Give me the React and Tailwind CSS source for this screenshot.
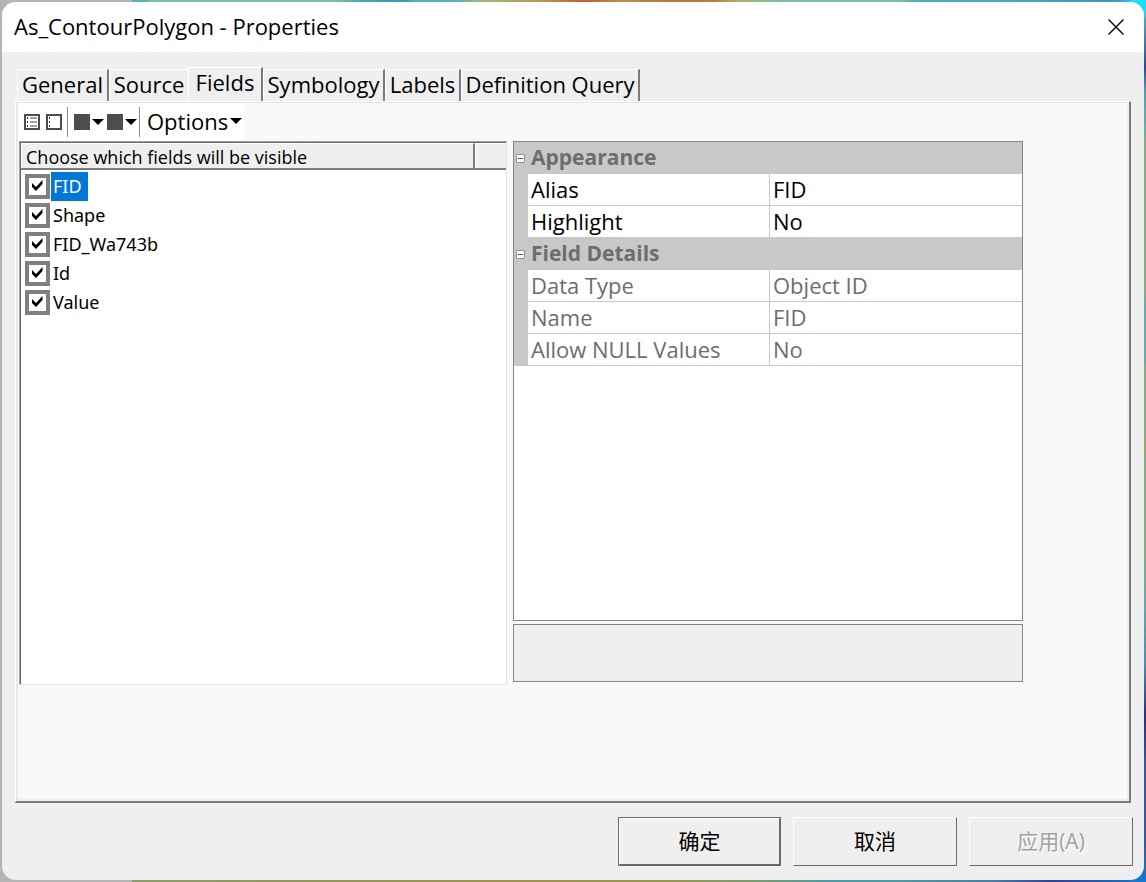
const TABS = [
  { name: 'General', className: 'w-[92px]' },
  { name: 'Source', className: 'w-[79px]' },
  { name: 'Fields', className: 'w-[75px]', active: true },
  { name: 'Symbology', className: 'w-[122px]' },
  { name: 'Labels', className: 'w-[76px]' },
  { name: 'Definition Query', className: 'w-[179px]' }
]

const FIELDS = ['FID', 'Shape', 'FID_Wa743b', 'Id', 'Value']

const GROUPS = [
  {
    title: 'Appearance',
    color: 'text-black',
    rows: [
      ['Alias', 'FID'],
      ['Highlight', 'No']
    ]
  },
  {
    title: 'Field Details',
    color: 'text-[#6d6d6d]',
    rows: [
      ['Data Type', 'Object ID'],
      ['Name', 'FID'],
      ['Allow NULL Values', 'No']
    ]
  }
]

const raised = 'border border-t-white border-l-white border-r-[#696969] border-b-[#696969]'

// Strips of the map that peek out from behind the dialog
function MapBackdrop() {
  return (
    <div aria-hidden="true" className="absolute inset-0 bg-[#b4b4b4]">
      <div className="absolute top-0 right-0 left-[132px] h-4 bg-[linear-gradient(to_right,#58b4b4_0_15px,#78bca4_15px_205px,#4ba5b4_230px,#4693b8_270px,#5bb2b5_285px_325px,#a0b878_350px,#b89850_410px,#c06038_450px,#b89048_490px,#bd7a3d_530px_580px,#a8b468_605px,#78bca4_650px_770px,#48a8bc_790px_870px,#4693b8_980px,#20c8f0_1000px)]" />
      <div className="absolute right-0 bottom-0 left-[132px] h-4 bg-[linear-gradient(to_right,#8c9c64,#a09448_400px,#98984c_540px,#7c9c6c_620px,#4c9ca4_700px_760px,#4480a8_860px,#3040a0_920px,#1878d0)]" />
      <div className="absolute top-0 right-0 bottom-0 w-4 bg-[linear-gradient(to_bottom,#20d8f8_0_14px,#48a8bc_20px,#3048a0_68px,#48a0b4_90px,#60b4ac_130px,#84ac80_140px_290px,#5cb0ac_310px_360px,#84ac80_370px_435px,#a8a058_445px,#84ac80_455px_555px,#60acac_600px,#4490b0_665px,#302c90_715px,#3854a8_765px_840px,#1878d0)]" />
    </div>
  )
}

function ListIcon({ lines }) {
  return (
    <svg viewBox="0 0 16 16" className="size-4" shapeRendering="crispEdges">
      <rect x="1" y="1" width="14" height="14" fill="#fff" stroke="#504850" strokeWidth="2" />
      <path d="M3 3h1v2H3zM3 7h1v2H3zM3 11h1v2H3z" fill="#333" />
      {lines && <path d="M6 4h7M6 8h7M6 12h7" stroke="#a0a0a0" strokeWidth="2" />}
    </svg>
  )
}

function Arrow() {
  return (
    <svg viewBox="0 0 12 6" className="h-[6px] w-3">
      <path d="M0 0h12L6 6z" fill="#000" />
    </svg>
  )
}

function Toolbar() {
  return (
    <div role="toolbar" className="flex h-[38px] w-max items-center bg-white pr-[2px] pl-[5px]">
      <button aria-label="Turn all fields on" className="mr-[6px]"><ListIcon lines /></button>
      <button aria-label="Turn all fields off"><ListIcon /></button>
      <div className="mr-[6px] ml-[5px] h-[30px] w-px bg-[#8a8a8a]" />
      <button aria-label="Move up" className="mr-[3px] flex items-center gap-[2px]">
        <span className="size-4 bg-[#4d4d4d]" />
        <Arrow />
      </button>
      <button aria-label="Move down" className="flex items-center gap-[2px]">
        <span className="size-4 bg-[#4d4d4d]" />
        <Arrow />
      </button>
      <div className="mr-[7px] ml-[2px] h-[30px] w-px bg-[#8a8a8a]" />
      <button className="flex items-center gap-[2px] pb-[2px]">
        Options
        <Arrow />
      </button>
    </div>
  )
}

function FieldList() {
  return (
    <div className="flex flex-[486] flex-col border border-t-[#a0a0a0] border-r-[#e3e3e3] border-b-[#e3e3e3] border-l-[#a0a0a0] bg-white text-[18px]">
      <div className="flex flex-1 flex-col border-t border-l border-[#696969]">
        <div className="flex h-[27px] border-b-2 border-[#7d7d7d] bg-[#efefef] leading-[26px]">
          <div className="flex-1 border-t border-r-2 border-l border-t-white border-r-[#7d7d7d] border-l-white pl-1">
            Choose which fields will be visible
          </div>
          <div className="w-[31px] border-t border-l border-white" />
        </div>
        <ul className='pt-[2px] pl-1 font-["Noto_Sans"]'>
          {FIELDS.map((name) => (
            <li key={name}>
              <label className="flex h-[29px] w-max items-center gap-px">
                <span className="relative size-[25px]">
                  <input
                    type="checkbox"
                    defaultChecked
                    className="block size-[25px] appearance-none border-4 border-[#808080] bg-white"
                  />
                  <svg viewBox="0 0 11 11" className="pointer-events-none absolute top-[6px] left-[7px] size-[11px]">
                    <path d="M0 3L4 7L10.500 0V4L4 11L0 7z" fill="#000" />
                  </svg>
                </span>
                <span className={name === 'FID' ? 'bg-[#0078d7] pr-[6px] pl-[2px] leading-[29px] text-white' : 'pl-[2px] leading-[29px]'}>
                  {name}
                </span>
              </label>
            </li>
          ))}
        </ul>
      </div>
    </div>
  )
}

function PropertyGrid() {
  return (
    <div className="flex-1 border border-[#828790] bg-white">
      <table className="w-full table-fixed border-separate border-spacing-0 text-left leading-[28px]">
        <colgroup>
          <col className="w-[14px]" />
          <col className="w-[242px]" />
          <col />
        </colgroup>
        {GROUPS.map((g) => (
          <tbody key={g.title}>
            <tr className="h-8 bg-[#c8c8c8]">
              <td className="p-0">
                <button aria-label={`Collapse ${g.title}`} className="ml-[2px] flex size-[9px] items-center rounded-[1px] border border-[#919191] bg-white px-px">
                  <span className="h-px w-full bg-[#2b50b4]" />
                </button>
              </td>
              <th colSpan="2" className="p-0 pb-[2px] pl-[3px] text-[21px] font-bold text-[#6d6d6d]">{g.title}</th>
            </tr>
            {g.rows.map(([label, value]) => (
              <tr key={label} className={`h-8 ${g.color}`}>
                <td className="bg-[#c8c8c8] p-0" />
                <th className="border-r border-b border-[#c8c8c8] p-0 pb-[2px] pl-[3px] font-normal">{label}</th>
                <td className="border-b border-[#c8c8c8] p-0 pb-[2px] pl-[3px]">{value}</td>
              </tr>
            ))}
          </tbody>
        ))}
      </table>
    </div>
  )
}

export default function App() {
  return (
    <div className='relative flex min-h-screen flex-col p-[2px] font-["Open_Sans","Noto_Sans_CJK_SC",sans-serif] text-[22px] text-black'>
      <MapBackdrop />
      <div role="dialog" aria-labelledby="title" className="relative flex flex-1 flex-col overflow-hidden rounded-[14px] bg-[#efefef]">
        <header className="flex h-[50px] items-center justify-between bg-white pr-5 pl-3">
          <h1 id="title" className="pb-[2px]">As_ContourPolygon - Properties</h1>
          <button aria-label="Close">
            <svg viewBox="0 0 16 16" className="size-4" fill="none" stroke="#111" strokeWidth="1.500">
              <path d="M.5.5l15 15M15.500.5l-15 15" />
            </svg>
          </button>
        </header>

        <div role="tablist" className="flex items-end pt-[15px] pl-[15px]">
          {TABS.map((t) => (
            <button
              key={t.name}
              role="tab"
              aria-selected={!!t.active}
              className={`${t.className} border-t border-l border-t-white border-l-white text-center ${t.name === 'Source' ? '' : 'border-r-2 border-r-[#7a7a7a]'} ${t.active ? 'h-[34px] pb-1 leading-[29px]' : 'h-8 pb-[2px] leading-[29px]'}`}
            >
              {t.name}
            </button>
          ))}
        </div>

        <main className="mx-[13px] flex flex-1 flex-col border-t border-r-2 border-b-2 border-l border-t-white border-r-[#7d7d7d] border-b-[#7d7d7d] border-l-white">
          <div className="flex flex-1 flex-col border-t border-r-2 border-b-2 border-l-2 border-t-[#e3e3e3] border-r-[#efefef] border-b-[#efefef] border-l-[#e9e9e9] bg-[#f9f9f9] pr-[104px] pb-[114px] pl-px">
            <Toolbar />
            <div className="flex flex-1 gap-[6px]">
              <FieldList />
              <div className="flex flex-[510] flex-col gap-[3px] pb-[3px]">
                <PropertyGrid />
                <div className="h-[58px] border border-[#828790] bg-[#efefef]" />
              </div>
            </div>
          </div>
        </main>

        <footer className="flex justify-end gap-3 pt-[14px] pr-[11px] pb-[14px] text-[21px]">
          <button className="h-[49px] w-[163px] border border-[#696969]">
            <span className="flex h-full items-center justify-center border border-t-white border-r-[#696969] border-b-[#696969] border-l-white">确定</span>
          </button>
          <button className={`h-[49px] w-[164px] ${raised}`}>取消</button>
          <button disabled className={`h-[49px] w-[164px] text-[#a0a0a0] [text-shadow:1px_1px_0_#fff] ${raised}`}>应用(A)</button>
        </footer>
      </div>
    </div>
  )
}
